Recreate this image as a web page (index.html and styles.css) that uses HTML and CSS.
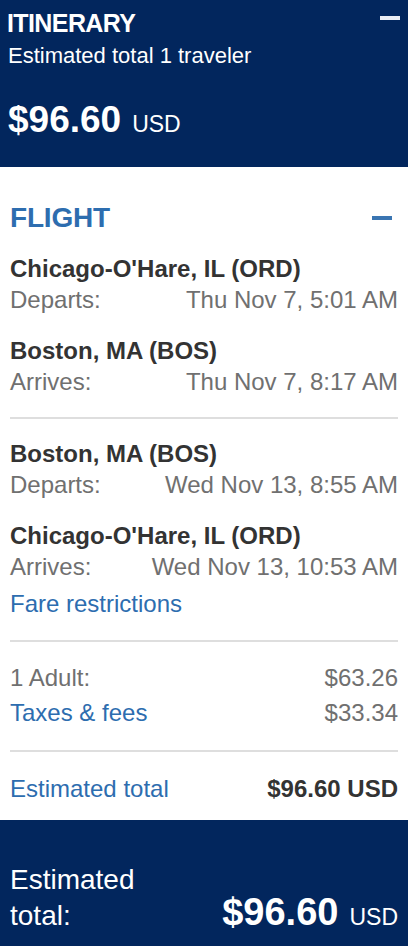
FILE: index.html
```html
<!DOCTYPE html>
<html lang="en">
<head>
<meta charset="utf-8">
<title>Itinerary</title>
<link rel="stylesheet" href="styles.css">
</head>
<body>
<div class="page">
  <header class="top">
    <div class="top-row">
      <h1 class="title">ITINERARY</h1>
      <span class="minus minus-light" aria-label="Collapse"></span>
    </div>
    <p class="sub">Estimated total 1 traveler</p>
    <p class="price"><span class="amt">$96.60</span><span class="cur">USD</span></p>
  </header>

  <section class="flight">
    <div class="sec-head">
      <h2 class="sec-title">FLIGHT</h2>
      <span class="minus minus-blue" aria-label="Collapse"></span>
    </div>

    <div class="seg">
      <div class="stop">
        <div class="city">Chicago-O'Hare, IL (ORD)</div>
        <div class="row"><span>Departs:</span><span>Thu Nov 7, 5:01 AM</span></div>
      </div>
      <div class="stop">
        <div class="city">Boston, MA (BOS)</div>
        <div class="row"><span>Arrives:</span><span>Thu Nov 7, 8:17 AM</span></div>
      </div>
    </div>

    <hr class="div">

    <div class="seg seg-after">
      <div class="stop">
        <div class="city">Boston, MA (BOS)</div>
        <div class="row"><span>Departs:</span><span>Wed Nov 13, 8:55 AM</span></div>
      </div>
      <div class="stop">
        <div class="city">Chicago-O'Hare, IL (ORD)</div>
        <div class="row"><span>Arrives:</span><span>Wed Nov 13, 10:53 AM</span></div>
      </div>
    </div>
    <a class="link fare" href="#">Fare restrictions</a>

    <hr class="div">

    <div class="prices">
      <div class="prow"><span class="muted">1 Adult:</span><span class="muted">$63.26</span></div>
      <div class="prow"><a class="link" href="#">Taxes &amp; fees</a><span class="muted">$33.34</span></div>
    </div>

    <hr class="div">

    <div class="total-row">
      <a class="link" href="#">Estimated total</a>
      <span class="total-val">$96.60 USD</span>
    </div>
  </section>

  <footer class="foot">
    <div class="foot-label">Estimated total:</div>
    <div class="foot-price"><span class="famt">$96.60</span><span class="fcur">USD</span></div>
  </footer>
</div>
</body>
</html>
```

FILE: styles.css
```css
* { box-sizing: border-box; }

html, body {
  margin: 0;
  padding: 0;
  background: #ffffff;
}

body {
  font-family: "Liberation Sans", Arial, Helvetica, sans-serif;
  color: #333333;
}

.page {
  width: 408px;
  min-height: 946px;
  display: flex;
  flex-direction: column;
}

/* ---------- Top navy header ---------- */
.top {
  background: #02265d;
  color: #ffffff;
  padding: 8px 8px 25px 7px;
}

.top-row {
  display: flex;
  justify-content: space-between;
  align-items: flex-start;
}

.title {
  margin: 0;
  font-size: 25px;
  font-weight: 700;
  line-height: 30px;
  letter-spacing: -0.6px;
}

.minus {
  display: block;
  width: 20px;
  height: 4px;
}

.minus-light {
  margin-top: 8px;
  background: #e9edf4;
}

.sub {
  margin: 4px 0 0 1px;
  font-size: 22px;
  line-height: 28px;
}

.price {
  margin: 28px 0 0 1px;
  display: flex;
  align-items: baseline;
  gap: 11px;
  height: 44px;
}

.amt {
  font-size: 37px;
  font-weight: 700;
  line-height: 44px;
}

.cur {
  font-size: 23px;
  line-height: 28px;
}

/* ---------- White flight section ---------- */
.flight {
  padding: 35px 10px 16px 10px;
  font-size: 24px;
}

.sec-head {
  display: flex;
  justify-content: space-between;
  align-items: flex-start;
}

.sec-title {
  margin: 0;
  font-size: 28px;
  line-height: 32px;
  font-weight: 700;
  color: #2d6daf;
  letter-spacing: -0.2px;
}

.minus-blue {
  margin-top: 14px;
  margin-right: 6px;
  background: #3a75b2;
}

.seg {
  margin-top: 19px;
  display: flex;
  flex-direction: column;
  gap: 20px;
}

.city {
  font-weight: 700;
  line-height: 31px;
  color: #333333;
}

.row {
  display: flex;
  justify-content: space-between;
  line-height: 31px;
  color: #707070;
}

.div {
  margin: 20px 0 0;
  height: 2px;
  border: none;
  background: #dedede;
}

.link {
  color: #2d6daf;
  text-decoration: none;
}

.fare {
  display: block;
  margin-top: 6px;
  line-height: 31px;
}

.fare + .div {
  margin-top: 21px;
}

.prices {
  margin-top: 18px;
}

.prow {
  display: flex;
  justify-content: space-between;
  line-height: 35px;
}

.muted {
  color: #707070;
}

.total-row {
  margin-top: 21px;
  display: flex;
  justify-content: space-between;
  line-height: 31px;
}

.total-val {
  font-weight: 700;
  color: #333333;
}

/* ---------- Bottom navy footer ---------- */
.foot {
  flex: 1;
  background: #02265d;
  color: #ffffff;
  padding: 42px 10px 12px 10px;
  display: flex;
  justify-content: space-between;
  align-items: last baseline;
}

.foot-label {
  width: 140px;
  font-size: 28px;
  line-height: 36px;
}

.foot-price {
  display: flex;
  align-items: baseline;
  gap: 11px;
}

.famt {
  font-size: 38px;
  font-weight: 700;
  line-height: 44px;
}

.fcur {
  font-size: 23px;
  line-height: 28px;
}
```
